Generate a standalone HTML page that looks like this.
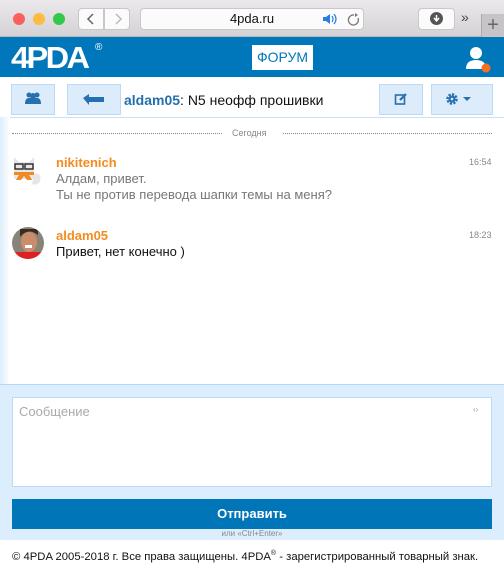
<!DOCTYPE html>
<html><head><meta charset="utf-8"><style>
*{margin:0;padding:0;box-sizing:border-box}
body{width:504px;height:575px;overflow:hidden;background:#fff;font-family:"Liberation Sans",Arial,sans-serif;position:relative}
.abs{position:absolute}
.chrome{left:0;top:0;width:504px;height:37px;background:linear-gradient(#ebe9eb,#d4d2d4);border-bottom:1px solid #b8b6b8}
.dot{width:12px;height:12px;border-radius:50%;top:13px}
.btn{background:#fbfbfb;border:1px solid #c9c7c9;border-radius:4px}
.hdr{left:0;top:37px;width:504px;height:40px;background:#0077ba}
.tb{background:#dcecfb;border:1px solid #bcdaf5;top:84px;height:31px}
.side{left:0;top:117px;width:10px;height:268px;background:linear-gradient(90deg,#dcecfb,#fff)}
</style></head><body>
<div class="abs chrome"></div>
<div class="abs dot" style="left:13px;background:#fc605c"></div>
<div class="abs dot" style="left:33px;background:#fdbc40"></div>
<div class="abs dot" style="left:53px;background:#34c84a"></div>
<div class="abs btn" style="left:78px;top:8px;width:26px;height:22px;border-radius:4px 0 0 4px"></div>
<div class="abs btn" style="left:104px;top:8px;width:26px;height:22px;border-radius:0 4px 4px 0"></div>
<svg class="abs" style="left:78px;top:8px" width="52" height="22"><path d="M15 6l-5 5 5 5" stroke="#666" stroke-width="1.5" fill="none"/><path d="M38 6l5 5-5 5" stroke="#bbb" stroke-width="1.5" fill="none"/></svg>
<div class="abs btn" style="left:140px;top:8px;width:224px;height:22px"></div>
<div class="abs" style="left:140px;top:11px;width:224px;text-align:center;font-size:13px;color:#111">4pda.ru</div>
<svg class="abs" style="left:322px;top:12px" width="40" height="14"><path d="M1 5h3l4-3v10l-4-3H1z" fill="#2a7de1"/><path d="M10 4q2 3 0 6M12 2q4 5 0 10" stroke="#2a7de1" fill="none" stroke-width="1.2"/><path d="M32 3a5 5 0 1 0 4 3" stroke="#777" fill="none" stroke-width="1.3"/><path d="M33 1l3 2-3 2z" fill="#777"/></svg>
<div class="abs btn" style="left:418px;top:8px;width:37px;height:22px"></div>
<div class="abs" style="left:430px;top:12px;width:13px;height:13px;border-radius:50%;background:#555"></div>
<svg class="abs" style="left:430px;top:12px" width="13" height="13"><path d="M6.5 3v5M4 6l2.5 3 2.5-3" stroke="#fff" stroke-width="1.5" fill="none"/></svg>
<div class="abs" style="left:461px;top:9px;font-size:14px;color:#444">»</div>
<div class="abs" style="left:481px;top:14px;width:23px;height:24px;background:#c6c4c6;border-left:1px solid #aaa;color:#666;font-size:20px;line-height:22px;text-align:center">+</div>
<div class="abs hdr"></div>
<div class="abs" style="left:11px;top:42px;color:#fff;font-weight:bold;font-size:31px;letter-spacing:-2.5px;line-height:31px;transform:scaleX(1.05);transform-origin:left">4PDA</div>
<div class="abs" style="left:95px;top:42px;color:#fff;font-size:10px">®</div>
<div class="abs" style="left:252px;top:45px;width:61px;height:25px;background:#fff;color:#0077ba;font-size:14px;text-align:center;line-height:25px">ФОРУМ</div>
<svg class="abs" style="left:465px;top:45px" width="30" height="30"><circle cx="11" cy="8" r="6" fill="#fff"/><path d="M1 24q0-9 10-9 10 0 10 9z" fill="#fff"/><circle cx="21" cy="23" r="4.5" fill="#f36f21"/></svg>
<div class="abs tb" style="left:11px;width:44px"></div>
<svg class="abs" style="left:24px;top:91px" width="18" height="14"><circle cx="5" cy="4" r="2.5" fill="#2770b0"/><circle cx="13" cy="4" r="2.5" fill="#2770b0"/><circle cx="9" cy="5" r="3" fill="#2770b0"/><path d="M1 13q0-6 4-6h8q4 0 4 6z" fill="#2770b0"/></svg>
<div class="abs tb" style="left:67px;width:54px"></div>
<svg class="abs" style="left:82px;top:93px" width="24" height="14"><path d="M1 5l6-4v3h15v5H7v3z" fill="#2770b0"/></svg>
<div class="abs" style="left:124px;top:92px;font-size:14px;color:#111"><b style="color:#2470ad">aldam05</b>: N5 неофф прошивки</div>
<div class="abs tb" style="left:379px;width:44px"></div>
<svg class="abs" style="left:394px;top:92px" width="14" height="14"><rect x="1.5" y="3" width="9" height="9" fill="none" stroke="#2770b0" stroke-width="1.6"/><path d="M6 8l6-6" stroke="#2770b0" stroke-width="2.2"/></svg>
<div class="abs tb" style="left:431px;width:62px"></div>
<svg class="abs" style="left:446px;top:93px" width="32" height="12"><circle cx="6" cy="6" r="4.5" fill="none" stroke="#2770b0" stroke-width="2.5" stroke-dasharray="2.2 1.3"/><circle cx="6" cy="6" r="3.5" fill="#2770b0"/><circle cx="6" cy="6" r="1.3" fill="#dcecfb"/><path d="M17 4h8l-4 4z" fill="#2770b0"/></svg>
<div class="abs" style="left:0;top:117px;width:504px;height:1px;background:#c8e1f7"></div>
<div class="abs side"></div>
<div class="abs" style="left:12px;top:133px;width:210px;border-top:1px dotted #888"></div>
<div class="abs" style="left:283px;top:133px;width:209px;border-top:1px dotted #888"></div>
<div class="abs" style="left:232px;top:128px;font-size:9px;color:#888">Сегодня</div>
<svg class="abs" style="left:12px;top:154px" width="32" height="32"><path d="M2 3l5 5h10l5-5v22H2z" fill="#e6e6e6"/><path d="M22 20q8-2 6 8-4 4-8 2z" fill="#e6e6e6"/><rect x="3" y="10" width="8" height="5" fill="none" stroke="#333" stroke-width="1.5"/><rect x="13" y="10" width="8" height="5" fill="none" stroke="#333" stroke-width="1.5"/><path d="M2 18h20v3l-5 0 3 5h-5l-3-4-3 4h-5l3-5H2z" fill="#f08a24"/></svg>
<div class="abs" style="left:56px;top:155px;font-size:13px;font-weight:bold;color:#f58b1f">nikitenich</div>
<div class="abs" style="left:56px;top:171px;font-size:13px;color:#777;line-height:16px">Алдам, привет.<br>Ты не против перевода шапки темы на меня?</div>
<div class="abs" style="left:469px;top:157px;font-size:9px;color:#888">16:54</div>
<svg class="abs" style="left:12px;top:227px" width="32" height="32"><defs><clipPath id="c"><circle cx="16" cy="16" r="16"/></clipPath></defs><g clip-path="url(#c)"><rect width="32" height="32" fill="#8a8478"/><ellipse cx="17" cy="15" rx="8" ry="10" fill="#c98d6c"/><path d="M8 10q8-10 18-2v-6H8z" fill="#3a2a20"/><rect x="0" y="25" width="32" height="8" fill="#e02020"/><rect x="13" y="18" width="7" height="3" fill="#fff"/></g></svg>
<div class="abs" style="left:56px;top:228px;font-size:13px;font-weight:bold;color:#f58b1f">aldam05</div>
<div class="abs" style="left:56px;top:244px;font-size:13px;color:#111">Привет, нет конечно )</div>
<div class="abs" style="left:469px;top:230px;font-size:9px;color:#888">18:23</div>
<div class="abs" style="left:0;top:384px;width:504px;height:156px;background:#dcedfd;border-top:1px solid #b5d8f7"></div>
<div class="abs" style="left:12px;top:397px;width:480px;height:90px;background:#fff;border:1px solid #bcdaf5"></div>
<div class="abs" style="left:19px;top:404px;font-size:13px;color:#aaa">Сообщение</div>
<div class="abs" style="left:473px;top:405px;font-size:8px;color:#999">‹›</div>
<div class="abs" style="left:12px;top:499px;width:480px;height:30px;background:#0076b8;color:#fff;font-weight:bold;font-size:13px;text-align:center;line-height:30px">Отправить</div>
<div class="abs" style="left:0;top:529px;width:504px;text-align:center;font-size:8px;color:#888">или «Ctrl+Enter»</div>
<div class="abs" style="left:12px;top:550px;font-size:11.3px;color:#111;white-space:nowrap">© 4PDA 2005-2018 г. Все права защищены. 4PDA<sup style="font-size:7px">®</sup> - зарегистрированный товарный знак.</div>
</body></html>
